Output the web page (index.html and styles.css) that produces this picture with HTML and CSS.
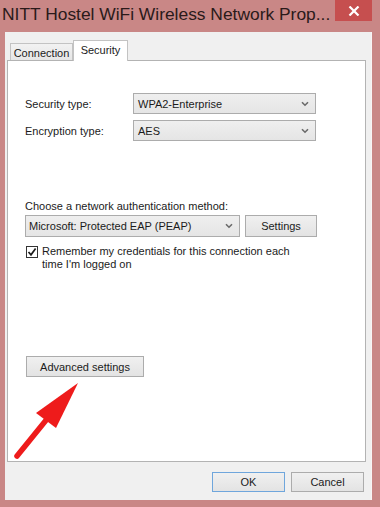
FILE: index.html
```html
<!DOCTYPE html>
<html>
  <head>
    <meta charset="utf-8" />
    <title>NITT Hostel WiFi Wireless Network Properties</title>
    <link rel="stylesheet" href="styles.css">
  </head>
  <body>
    <div class="window">
      <div class="titlebar">
        <div class="title">NITT Hostel WiFi Wireless Network Prop...</div>
        <div class="close">
          <svg width="12" height="10" viewBox="0 0 12 10">
            <path d="M1.5 0.5 L10.5 9.5 M10.5 0.5 L1.5 9.5" stroke="#fff" stroke-width="2.2" />
          </svg>
        </div>
      </div>

      <div class="client">
        <div class="tabs">
          <div class="tab">Connection</div>
          <div class="tab tab-active">Security</div>
        </div>

        <div class="panel">
          <div class="field">
            <span class="label">Security type:</span>
            <div class="combo">
              <span>WPA2-Enterprise</span>
              <svg class="chevron" width="8" height="6" viewBox="0 0 8 6"><path d="M1 1.2 L4 4.2 L7 1.2" /></svg>
            </div>
          </div>
          <div class="field field-next">
            <span class="label">Encryption type:</span>
            <div class="combo">
              <span>AES</span>
              <svg class="chevron" width="8" height="6" viewBox="0 0 8 6"><path d="M1 1.2 L4 4.2 L7 1.2" /></svg>
            </div>
          </div>

          <div class="caption">Choose a network authentication method:</div>
          <div class="auth-row">
            <div class="combo combo-auth">
              <span>Microsoft: Protected EAP (PEAP)</span>
              <svg class="chevron" width="8" height="6" viewBox="0 0 8 6"><path d="M1 1.2 L4 4.2 L7 1.2" /></svg>
            </div>
            <button class="btn btn-settings">Settings</button>
          </div>

          <label class="check-row">
            <span class="checkbox">
              <svg width="10" height="10" viewBox="0 0 10 10"><path d="M1.5 5 L4 7.8 L8.6 1.6" /></svg>
            </span>
            <span class="check-text">Remember my credentials for this connection each time I'm logged on</span>
          </label>

          <button class="btn btn-advanced">Advanced settings</button>

          <!-- red annotation arrow -->
          <svg class="arrow" width="76" height="85" viewBox="9 377 76 85">
            <line x1="17" y1="456" x2="47" y2="419" stroke="#ee1b1b" stroke-width="5.5" stroke-linecap="round" />
            <polygon points="78,383 36,413 56,428" fill="#ee1b1b" />
          </svg>
        </div>

        <div class="footer">
          <button class="btn btn-ok">OK</button>
          <button class="btn">Cancel</button>
        </div>
      </div>
    </div>
  </body>
</html>
```

FILE: styles.css
```css
html,
body {
  margin: 0;
  padding: 0;
}
body {
  width: 380px;
  height: 507px;
  overflow: hidden;
  background: #c98786;
  font-family: "Liberation Sans", Arial, sans-serif;
  font-size: 11px;
  color: #1b1b1b;
}
.window {
  width: 380px;
  height: 507px;
}
.titlebar {
  display: flex;
  align-items: flex-start;
  height: 32px;
}
.title {
  padding: 3px 0 0 2px;
  font-size: 17.4px;
  line-height: 22px;
  color: #2a1a1a;
  white-space: nowrap;
}
.close {
  margin-left: auto;
  margin-right: 8px;
  width: 37px;
  height: 21px;
  background: #c64f4f;
  display: flex;
  align-items: center;
  justify-content: center;
}
.client {
  margin-left: 5px;
  width: 367px;
  height: 468px;
  box-sizing: border-box;
  padding: 8px 0 0 2px;
  background: #f0f0f0;
  border-right: 1px solid #f8f4f4;
}
.tabs {
  display: flex;
  align-items: flex-end;
  height: 20px;
  padding-left: 3px;
}
.tab {
  box-sizing: border-box;
  width: 63px;
  height: 17px;
  border: 1px solid #c3c3c3;
  border-bottom: none;
  background: linear-gradient(#f2f2f2, #e6e6e6);
  display: flex;
  align-items: center;
  justify-content: center;
  padding-top: 1px;
}
.tab-active {
  position: relative;
  z-index: 1;
  width: 55px;
  height: 21px;
  margin-bottom: -1px;
  background: #fff;
  padding-top: 0;
  padding-bottom: 2px;
}
.panel {
  position: relative;
  box-sizing: border-box;
  width: 359px;
  height: 402px;
  padding: 32px 0 0 17px;
  border: 1px solid #b3b3b3;
  background: #fff;
}
.field {
  display: flex;
  align-items: center;
  height: 21px;
}
.field-next {
  margin-top: 6px;
}
.label {
  width: 108px;
}
.combo {
  box-sizing: border-box;
  width: 183px;
  height: 21px;
  display: flex;
  align-items: center;
  justify-content: space-between;
  padding: 0 6px 0 4px;
  border: 1px solid #acacac;
  background: linear-gradient(#efefef, #e5e5e5);
}
.chevron path {
  fill: none;
  stroke: #6a6a6a;
  stroke-width: 1.6;
}
.caption {
  margin-top: 58px;
  line-height: 14px;
}
.auth-row {
  display: flex;
  gap: 5px;
  margin-top: 2px;
}
.combo-auth {
  width: 215px;
  height: 22px;
  padding-left: 3px;
}
.btn {
  box-sizing: border-box;
  height: 20px;
  padding: 0;
  border: 1px solid #acacac;
  background: linear-gradient(#f0f0f0, #e3e3e3);
  font-family: inherit;
  font-size: 11px;
  color: #1b1b1b;
}
.btn-settings {
  width: 72px;
  height: 22px;
}
.check-row {
  display: flex;
  align-items: flex-start;
  gap: 4px;
  margin: 8px 0 0 1px;
}
.checkbox {
  box-sizing: border-box;
  width: 12px;
  height: 12px;
  margin-top: 1px;
  border: 1px solid #333;
  background: #fff;
  display: flex;
  align-items: center;
  justify-content: center;
}
.checkbox path {
  fill: none;
  stroke: #1b1b1b;
  stroke-width: 1.7;
}
.check-text {
  width: 262px;
  line-height: 13px;
}
.btn-advanced {
  display: block;
  width: 118px;
  height: 21px;
  margin: 85px 0 0 1px;
}
.arrow {
  position: absolute;
  left: 1px;
  top: 316px;
}
.footer {
  display: flex;
  justify-content: flex-end;
  gap: 6px;
  margin-top: 10px;
  padding-right: 7px;
}
.footer .btn {
  width: 73px;
}
.btn-ok {
  border-color: #6fa6dc;
}
```
